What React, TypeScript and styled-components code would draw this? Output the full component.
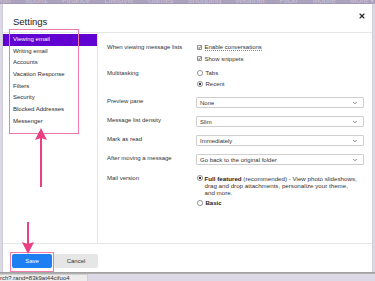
import React, { FC } from "react";
import styled, { createGlobalStyle } from "styled-components";
import { X, ChevronDown } from "lucide-react";

const GlobalStyle = createGlobalStyle`
  html, body {
    margin: 0;
    padding: 0;
    background: #dcd8e6;
  }
  * {
    box-sizing: border-box;
  }
`;

const NAV_WORDS = [
  "Mail",
  "Sports",
  "Finance",
  "Lifestyle",
  "Games",
  "Shopping",
  "Weather",
  "Flickr",
  "Mobile",
  "More ▾",
];

const SECTIONS = [
  "Viewing email",
  "Writing email",
  "Accounts",
  "Vacation Response",
  "Filters",
  "Security",
  "Blocked Addresses",
  "Messenger",
];

const CheckIcon: FC = () => (
  <svg width="5" height="5" viewBox="0 0 10 10">
    <rect x="0.8" y="0.8" width="8.4" height="8.4" rx="1" fill="#fff" stroke="#555" strokeWidth="1.4" />
    <path d="M2.4 5.2 L4.3 7.1 L7.8 2.8" fill="none" stroke="#333" strokeWidth="1.5" />
  </svg>
);

const RadioIcon: FC<{ checked?: boolean }> = ({ checked }) => (
  <svg width="6" height="6" viewBox="0 0 12 12">
    <circle cx="6" cy="6" r="5.2" fill="#fff" stroke="#555" strokeWidth="1.2" />
    {checked && <circle cx="6" cy="6" r="2.4" fill="#333" />}
  </svg>
);

const Select: FC<{ value: string }> = ({ value }) => (
  <SelectBox>
    <span>{value}</span>
    <ChevronDown size={6} strokeWidth={3} color="#555" />
  </SelectBox>
);

const App: FC = () => {
  return (
    <Page>
      <GlobalStyle />
      <TopNav>
        {NAV_WORDS.map((w) => (
          <NavWord key={w}>{w}</NavWord>
        ))}
      </TopNav>

      <Modal>
        <Header>
          <Title>Settings</Title>
          <CloseBtn>
            <X size={8} strokeWidth={3.2} color="#222" />
          </CloseBtn>
        </Header>

        <Body>
          <SideNav>
            {SECTIONS.map((s, i) => (
              <NavItem key={s} active={i === 0}>
                {s}
              </NavItem>
            ))}
          </SideNav>

          <Content>
            <Row gap={0}>
              <Label>When viewing message lists</Label>
              <Controls>
                <OptionLine>
                  <CheckIcon />
                  <Dotted>Enable conversations</Dotted>
                </OptionLine>
                <OptionLine>
                  <CheckIcon />
                  <span>Show snippets</span>
                </OptionLine>
              </Controls>
            </Row>

            <Row gap={3.5}>
              <Label>Multitasking</Label>
              <Controls>
                <OptionLine>
                  <RadioIcon />
                  <span>Tabs</span>
                </OptionLine>
                <OptionLine>
                  <RadioIcon checked />
                  <span>Recent</span>
                </OptionLine>
              </Controls>
            </Row>

            <Row gap={7.5}>
              <SelectLabel>Preview pane</SelectLabel>
              <Select value="None" />
            </Row>
            <Row gap={8}>
              <SelectLabel>Message list density</SelectLabel>
              <Select value="Slim" />
            </Row>
            <Row gap={8}>
              <SelectLabel>Mark as read</SelectLabel>
              <Select value="Immediately" />
            </Row>
            <Row gap={8}>
              <SelectLabel>After moving a message</SelectLabel>
              <Select value="Go back to the original folder" />
            </Row>

            <Row gap={9.5}>
              <TightLabel>Mail version</TightLabel>
              <Controls>
                <VersionOption>
                  <IconSlot>
                    <RadioIcon checked />
                  </IconSlot>
                  <VersionText>
                    <b>Full featured</b> (recommended) - View photo slideshows,
                    <br />
                    drag and drop attachments, personalize your theme,
                    <br />
                    and more.
                  </VersionText>
                </VersionOption>
                <OptionLine style={{ marginTop: 1 }}>
                  <RadioIcon />
                  <b>Basic</b>
                </OptionLine>
              </Controls>
            </Row>
          </Content>
        </Body>

        <Footer>
          <Button primary>Save</Button>
          <Button>Cancel</Button>
        </Footer>
      </Modal>

      <BottomStrip>
        <StatusBar>rch?.rand=83k9at44cifuo4</StatusBar>
      </BottomStrip>

      <Highlight style={{ left: 9, top: 29, width: 70, height: 105 }} />
      <Highlight style={{ left: 10, top: 252, width: 44, height: 20 }} />

      <Arrow style={{ left: 35, top: 128 }} direction="up" length={59} />
      <Arrow style={{ left: 22, top: 222 }} direction="down" length={32} />
    </Page>
  );
};

const Arrow: FC<{ direction: "up" | "down"; length: number; style?: React.CSSProperties }> = ({
  direction,
  length,
  style,
}) => (
  <ArrowWrap style={style}>
    <svg width="12" height={length} viewBox={`0 0 12 ${length}`}>
      {direction === "up" ? (
        <>
          <path d={`M6 0 L12 12 L6 10 L0 12 Z`} fill="#ec3f82" />
          <rect x="5" y="9" width="2" height={length - 9} fill="#ec3f82" />
        </>
      ) : (
        <>
          <rect x="5" y="0" width="2" height={length - 9} fill="#ec3f82" />
          <path d={`M6 ${length} L12 ${length - 12} L6 ${length - 10} L0 ${length - 12} Z`} fill="#ec3f82" />
        </>
      )}
    </svg>
  </ArrowWrap>
);

const Page = styled.div`
  position: relative;
  width: 375px;
  height: 281px;
  overflow: hidden;
  display: flex;
  flex-direction: column;
  background: #dcd8e6;
  font-family: "Liberation Sans", Arial, sans-serif;
  color: #333;
`;

const TopNav = styled.div`
  height: 4px;
  flex-shrink: 0;
  overflow: hidden;
  display: flex;
  align-items: flex-end;
  gap: 18px;
  padding-left: 0;
  background: #aaa1bd;
`;

const NavWord = styled.span`
  font-size: 8px;
  line-height: 6px;
  color: #c7c0d4;
  white-space: nowrap;
  margin-left: -4px;
`;

const Modal = styled.div`
  width: 369px;
  height: 268px;
  margin-left: 3px;
  flex-shrink: 0;
  background: #fff;
  display: flex;
  flex-direction: column;
  box-shadow: 0 0 1px rgba(0, 0, 0, 0.3);
`;

const Header = styled.div`
  height: 29px;
  flex-shrink: 0;
  display: flex;
  justify-content: space-between;
  align-items: flex-start;
  padding: 8px 6px 0 10px;
  border-bottom: 1px solid #e6e6e6;
`;

const Title = styled.div`
  margin-top: 4px;
  font-size: 9.5px;
  line-height: 11px;
  color: #222;
`;

const CloseBtn = styled.div`
  display: flex;
  width: 8px;
  height: 8px;
`;

const Body = styled.div`
  flex: 1;
  display: flex;
  min-height: 0;
`;

const SideNav = styled.div`
  width: 95px;
  flex-shrink: 0;
  padding-top: 1px;
  border-right: 1px solid #e6e6e6;
`;

const NavItem = styled.div<{ active?: boolean }>`
  height: 11.7px;
  line-height: 11.7px;
  padding-left: 10px;
  font-size: 6px;
  white-space: nowrap;
  color: ${(p) => (p.active ? "#fff" : "#2b2b2b")};
  background: ${(p) => (p.active ? "#6001d2" : "transparent")};
`;

const Content = styled.div`
  flex: 1;
  padding: 9px 8px 0 9px;
  font-size: 6px;
  color: #333;
`;

const Row = styled.div<{ gap: number }>`
  display: grid;
  grid-template-columns: 89px 168px;
  align-items: start;
  margin-top: ${(p) => p.gap}px;
`;

const Label = styled.div`
  line-height: 11px;
  white-space: nowrap;
`;

const SelectLabel = styled.div`
  line-height: 9px;
  white-space: nowrap;
`;

const TightLabel = styled.div`
  line-height: 7.3px;
  white-space: nowrap;
`;

const Controls = styled.div`
  display: flex;
  flex-direction: column;
`;

const OptionLine = styled.div`
  height: 11px;
  display: flex;
  align-items: center;
  gap: 2.5px;
  padding-left: 1px;
  white-space: nowrap;

  b {
    font-weight: bold;
    color: #222;
  }
`;

const Dotted = styled.span`
  line-height: 6px;
  border-bottom: 1px dotted #888;
`;

const VersionOption = styled.div`
  display: flex;
  align-items: flex-start;
  gap: 2px;
  padding-left: 0.5px;
`;

const IconSlot = styled.div`
  height: 7.3px;
  display: flex;
  align-items: center;
`;

const VersionText = styled.div`
  font-size: 6.2px;
  line-height: 7.3px;
  white-space: nowrap;

  b {
    font-weight: bold;
    color: #222;
  }
`;

const SelectBox = styled.div`
  height: 11px;
  display: flex;
  align-items: center;
  justify-content: space-between;
  padding: 0 5px 0 3px;
  border: 1px solid #cfcfcf;
  border-radius: 1px;
  background: #fff;
  color: #333;
  white-space: nowrap;
`;

const Footer = styled.div`
  height: 29px;
  flex-shrink: 0;
  display: flex;
  align-items: flex-start;
  gap: 2px;
  padding: 10px 0 0 9px;
  border-top: 1px solid #e6e6e6;
`;

const Button = styled.div<{ primary?: boolean }>`
  width: ${(p) => (p.primary ? 40 : 44)}px;
  height: 14px;
  display: flex;
  align-items: center;
  justify-content: center;
  border-radius: 2px;
  font-size: 6px;
  color: ${(p) => (p.primary ? "#fff" : "#333")};
  background: ${(p) => (p.primary ? "#1d7ff2" : "#e6e6e6")};
`;

const BottomStrip = styled.div`
  flex: 1;
  position: relative;
  background: linear-gradient(#9a9a9a 0, #b8b8b8 2px, #dcd8e6 2px);
  display: flex;
  align-items: flex-end;
`;

const StatusBar = styled.div`
  width: 88px;
  height: 7px;
  line-height: 7px;
  padding-left: 0;
  font-size: 6px;
  color: #333;
  background: #ececec;
  border-top: 1px solid #d0d0d0;
  border-right: 1px solid #d0d0d0;
  white-space: nowrap;
  overflow: hidden;
`;

const Highlight = styled.div`
  position: absolute;
  border: 1px solid #f07aa9;
  pointer-events: none;
`;

const ArrowWrap = styled.div`
  position: absolute;
  display: flex;
  pointer-events: none;
`;

export default App;
